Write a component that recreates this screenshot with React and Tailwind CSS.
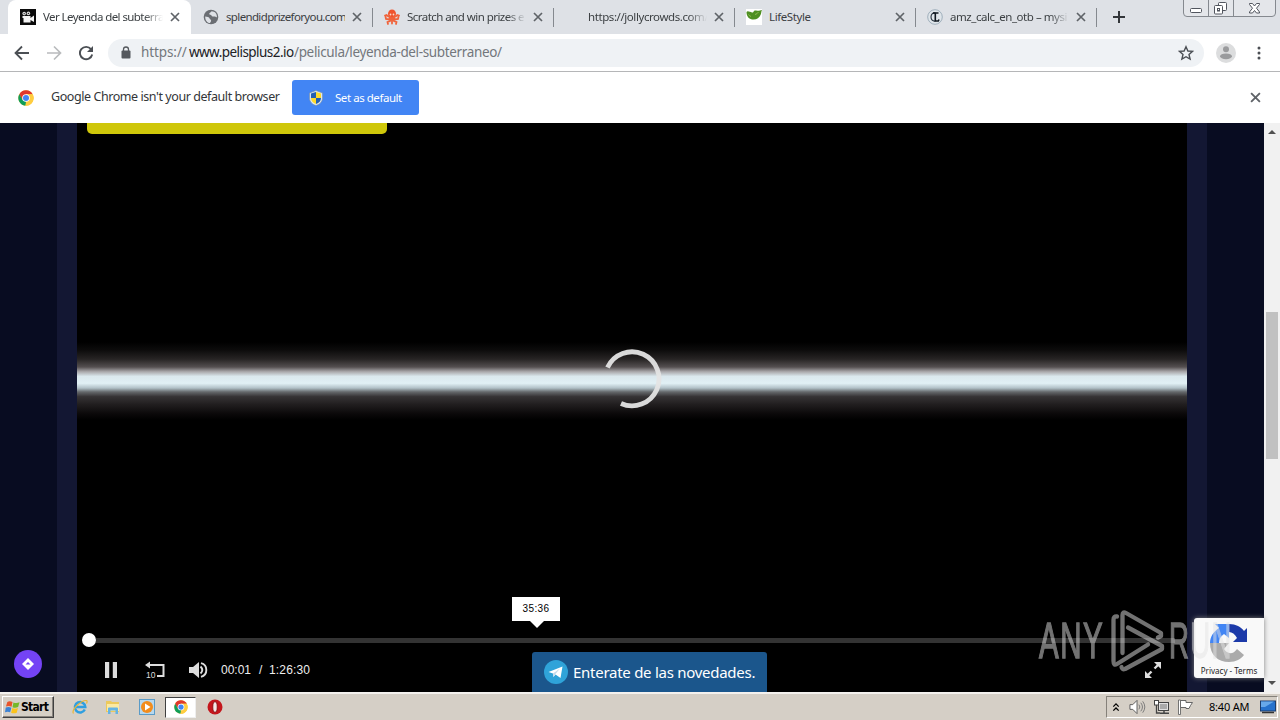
import React from "react";
import clsx from "clsx";

const CloseIcon = ({ className }) => (
  <svg viewBox="0 0 10 10" className={clsx("shrink-0", className)}>
    <path d="M1 1 9 9M9 1 1 9" stroke="currentColor" strokeWidth="1.7" fill="none" />
  </svg>
);

const ChromeLogo = ({ className }) => (
  <svg viewBox="0 0 48 48" className={clsx("shrink-0", className)}>
    <circle cx="24" cy="24" r="23" fill="#ffcd40" />
    <path d="M24 24 13 30 4 12.5A23 23 0 0 1 44 13H24Z" fill="#e0382c" />
    <path d="M4 12.5 14 30 24 35 22 47A23 23 0 0 1 4 12.5Z" fill="#0f9d58" />
    <path d="M24 13H44A23 23 0 0 1 22 47L34 29Z" fill="#ffcd40" />
    <circle cx="24" cy="24" r="11.5" fill="#fff" />
    <circle cx="24" cy="24" r="9" fill="#4285f4" />
  </svg>
);

/* ---------- favicons ---------- */

const CameraFavicon = () => (
  <svg viewBox="0 0 16 16" className="w-4 h-4">
    <rect width="16" height="16" fill="#0b0b0b" />
    <circle cx="4.2" cy="4.6" r="1.8" fill="#d8d8d8" />
    <circle cx="8.4" cy="4.4" r="1.8" fill="#d8d8d8" />
    <circle cx="4.2" cy="4.6" r=".7" fill="#222" />
    <circle cx="8.4" cy="4.4" r=".7" fill="#222" />
    <path d="M2.500 7h8v2L14 6.500v6.500L10.500 11V13.500H3.500V9H2.500Z" fill="#f4f4f4" />
  </svg>
);

const GlobeFavicon = () => (
  <svg viewBox="0 0 16 16" className="w-4 h-4">
    <circle cx="8" cy="8" r="7.3" fill="#6b6e73" />
    <path d="M2.2 7.5c2 .2 4 .4 4.400 2 .3 1 1.600.8 1.500 2.200-.1 1-.8 1.500-1.100 2.400C4.200 13.800 2 11.300 2.200 7.500ZM8.500 2.200C8.300 3.500 6 3.600 6.200 5c.2 1.100 2 .6 2.300 1.600.2.9 1.100 1.200 2 .9 1.300-.3 2 .2 3.400.9C14.300 5 12 2.300 8.500 2.200Z" fill="#dee1e6" />
  </svg>
);

const OctopusFavicon = () => (
  <svg viewBox="0 0 16 16" className="w-4 h-4">
    <ellipse cx="8" cy="4.800" rx="4" ry="4.400" fill="#f0542d" />
    <path d="M6 8 5.500 10.500 2 10 1.500 7.500M4.500 7.500 2.500 6 1 6.500M10 8l.5 2.500 3.500-.5.5-2.500M11.500 7.500l2-1.500 1.500.5M7 9l-1 3-2.500 1 .5 2M9 9l1 3 2.500 1-.5 2M8 9v5.500" stroke="#f0643c" strokeWidth="1.800" fill="none" strokeLinecap="round" />
    <circle cx="6.500" cy="5.500" r=".9" fill="#fbd9c9" />
    <circle cx="9.500" cy="5.500" r=".9" fill="#fbd9c9" />
  </svg>
);

const LeafFavicon = () => (
  <svg viewBox="0 0 16 16" className="w-4 h-4">
    <rect width="16" height="16" fill="#fff" />
    <path d="M.5 3C1.500 1.500 4 3 6 3.500 8 4 7 1 10 1.500c2 .3 3 .5 6-.5-1 2-.5 3-1.500 5C13.500 8.500 11 10.500 7.500 10.500 3.500 10.500.5 8 .5 3Z" fill="#4f9023" />
    <path d="M9 5.500q2-.3 3.500-2.500M2.500 5.500q1 1.500 2.500 2" stroke="#8fbb52" fill="none" />
  </svg>
);

const MonogramFavicon = () => (
  <svg viewBox="0 0 16 16" className="w-4 h-4">
    <circle cx="8" cy="8" r="7.300" fill="#dfe5ea" stroke="#8fa2b0" strokeWidth=".8" />
    <path d="M8.500 4C5.500 3.500 4 5.500 4 8s1.500 4.500 4.500 4" fill="none" stroke="#26323e" strokeWidth="1.100" />
    <path d="M6 4h5.500M8.300 4v8h3l.7-1.500" fill="none" stroke="#101820" strokeWidth="1.600" />
  </svg>
);

const tabs = [
  { title: "Ver Leyenda del subterra", icon: <CameraFavicon />, active: true, fade: true, track: "tracking-[-0.58px]" },
  { title: "splendidprizeforyou.com", icon: <GlobeFavicon />, track: "tracking-[-0.64px]" },
  { title: "Scratch and win prizes e", icon: <OctopusFavicon />, fade: true, track: "tracking-[-0.54px]" },
  { title: "https://jollycrowds.com/", icon: null, fade: true, track: "tracking-[-0.42px]" },
  { title: "LifeStyle", icon: <LeafFavicon />, track: "tracking-[-0.4px]" },
  { title: "amz_calc_en_otb – mysi", icon: <MonogramFavicon />, fade: true, track: "tracking-[-0.45px]" },
];

function Tab({ tab, divider }) {
  return (
    <div
      className={clsx(
        "relative flex items-center w-[181px] h-[34px] shrink-0",
        tab.active
          ? "mr-px pl-2.5 bg-white rounded-t-lg shadow-[-2px_0_0_#fff]"
          : "pl-[11px]"
      )}
    >
      <div className="w-4 h-4 shrink-0">{tab.icon}</div>
      <div
        className={clsx(
          "ml-[7px] overflow-hidden whitespace-nowrap text-[11.5px] leading-4 text-[#3c4043]",
          tab.active ? "w-[120px]" : "w-[119px]",
          tab.track,
          tab.fade && "[mask-image:linear-gradient(to_right,#000_84%,transparent)]"
        )}
      >
        {tab.title}
      </div>
      <CloseIcon className="ml-[7px] w-[10px] h-[10px] text-[#5f6368]" />
      {divider && <div className="absolute right-0 top-2 w-px h-[19px] bg-[#85898f]" />}
    </div>
  );
}

function WindowButtons() {
  return (
    <svg viewBox="0 0 94 18" className="absolute left-[1182px] top-0 w-[94px] h-[18px]">
      <path d="M1.500 0V13q0 3.500 3.500 3.500H90q3.500 0 3.500-3.500V0M26.500 0V16M51.500 0V16" fill="#e4e6ea" stroke="#85898f" />
      <g fill="#fff" stroke="#51555e">
        <rect x="8.500" y="8.500" width="11" height="4" rx="1" />
        <rect x="36.500" y="2.500" width="8" height="8" rx="1" />
        <rect x="32.500" y="5.500" width="8" height="8.500" rx="1" />
        <rect x="35.500" y="8.500" width="2" height="2.500" />
        <path d="M67.500 3.500h3l2 2.500 2-2.500h3v1l-3 3.700 3 3.800v1h-3l-2-2.500-2 2.500h-3v-1l3-3.800-3-3.700Z" />
      </g>
    </svg>
  );
}

function Toolbar() {
  return (
    <div className="flex items-center h-[38px] pl-[14px] bg-white border-b border-[#b5b6b8]">
      <svg viewBox="0 0 16 16" className="w-4 h-4 text-[#4b4f54]">
        <path d="M15 8H2M8 1.500 1.500 8 8 14.500" stroke="currentColor" strokeWidth="1.800" fill="none" />
      </svg>
      <svg viewBox="0 0 16 16" className="ml-4 w-4 h-4 text-[#b9bbbd]">
        <path d="M1 8H14M8 1.500 14.500 8 8 14.500" stroke="currentColor" strokeWidth="1.700" fill="none" />
      </svg>
      <svg viewBox="0 0 16 16" className="ml-4 w-4 h-4 text-[#4b4f54]">
        <path d="M13 4.200A6.200 6.200 0 1 0 14.200 9.500" stroke="currentColor" strokeWidth="1.900" fill="none" />
        <path d="M15 1V7H9Z" fill="currentColor" />
      </svg>
      <div className="ml-[14px] flex items-center w-[1096px] h-7 rounded-full bg-[#eff2f5] pl-[13px] pr-[10px]">
        <svg viewBox="0 0 10 13" className="w-[10px] h-[13px] mr-[10px] text-[#55595e]">
          <rect x=".5" y="4.500" width="9" height="8" rx="1" fill="currentColor" />
          <path d="M2.500 5V3.500a2.500 2.500 0 0 1 5 0V5" stroke="currentColor" strokeWidth="1.300" fill="none" />
        </svg>
        <div className="flex-1 flex whitespace-nowrap text-[13.5px] leading-5 text-[#73777c] -mt-px">
          <span className="w-[48px] tracking-[-0.1px]">https://</span>
          <span className="w-[105px] text-[#202124] tracking-[-0.55px]">www.pelisplus2.io</span>
          <span className="tracking-[-0.35px]">/pelicula/leyenda-del-subterraneo/</span>
        </div>
        <svg viewBox="0 0 16 16" className="w-4 h-4">
          <path d="m8 1.700 1.900 4.300 4.700.4-3.600 3.100 1.100 4.600L8 11.700l-4.100 2.400L5 9.500 1.400 6.400 6.100 6Z" fill="none" stroke="#4b4f54" strokeWidth="1.400" />
        </svg>
      </div>
      <svg viewBox="0 0 20 20" className="ml-3 w-5 h-5">
        <circle cx="10" cy="10" r="10" fill="#dcddde" />
        <circle cx="10" cy="6.300" r="3" fill="#9a9b9d" />
        <ellipse cx="10" cy="13.300" rx="6" ry="2.900" fill="#9a9b9d" />
      </svg>
      <svg viewBox="0 0 4 14" className="ml-[21px] w-1 h-3.5 text-[#4b4f54]">
        <g fill="currentColor">
          <circle cx="2" cy="2" r="1.500" />
          <circle cx="2" cy="7" r="1.500" />
          <circle cx="2" cy="12" r="1.500" />
        </g>
      </svg>
    </div>
  );
}

function DefaultBrowserBar() {
  return (
    <div className="flex items-center h-[51px] bg-white pl-[18px] pr-[19px]">
      <ChromeLogo className="w-4 h-4" />
      <div className="ml-[17px] -mt-[2px] w-[229px] whitespace-nowrap text-[12.5px] leading-5 text-[#333639] tracking-[-0.43px]">
        Google Chrome isn't your default browser
      </div>
      <button className="ml-3 flex items-center w-[127px] h-[35px] rounded-[3px] bg-[#4285f4] pl-[17px] text-white text-[11.5px] whitespace-nowrap tracking-[-0.45px]">
        <svg viewBox="0 0 14 16" className="w-[14px] h-[16px] mr-3">
          <path d="M7 .5 13.500 3V8c0 4-3 6.500-6.500 7.500C3.500 14.500.5 12 .5 8V3Z" fill="#d8e7f5" stroke="#778ba3" strokeWidth=".6" />
          <path d="M7 2l5 1.600V8H7ZM2 8h5v6C4 13 2 11 2 8Z" fill="#ffdb2b" />
          <path d="M7 2 2 3.600V8h5ZM7 8v6c3-1 5-3 5-6Z" fill="#2560b2" />
        </svg>
        Set as default
      </button>
      <div className="flex-1" />
      <CloseIcon className="w-[11px] h-[11px] text-[#5f6368]" />
    </div>
  );
}

function PlayerControls() {
  return (
    <div className="relative h-[62px]">
      {/* timeline */}
      <div className="flex items-center h-5 pl-[5px] pr-3">
        <div className="w-[14px] h-[14px] rounded-full bg-white" />
        <div className="flex-1 h-[5px] bg-[#333]" />
      </div>
      <div className="flex items-center h-10 pl-7 pr-[26px] text-[#ddd]">
        <svg viewBox="0 0 12 16" className="w-3 h-4">
          <path d="M0 0H4.200V16H0ZM7.800 0H12V16H7.800Z" fill="currentColor" />
        </svg>
        <svg viewBox="0 0 20 18" className="ml-7 w-5 h-[18px]">
          <path d="M2 4H18.500V15H12" stroke="currentColor" strokeWidth="2" fill="none" />
          <path d="M0 4 5 .5V7.500Z" fill="currentColor" />
          <text x="1" y="16.500" fontSize="8.500" fontFamily="Liberation Sans, sans-serif" fill="currentColor">10</text>
        </svg>
        <svg viewBox="0 0 20 16" className="ml-6 w-5 h-4">
          <path d="M0 5H4L10 0V16L4 11H0Z" fill="currentColor" />
          <path d="M11.500 4.500Q15 8 11.500 11.500M12 1.200A7 7 0 0 1 12 14.800" stroke="currentColor" strokeWidth="1.900" fill="none" />
        </svg>
        <div className="ml-3 flex text-[12px] text-[#eee] font-['Liberation_Sans',sans-serif] whitespace-pre">
          <span className="w-[38px]">00:01</span>
          <span className="w-[10px]">/</span>
          <span className="tracking-[0.15px]">1:26:30</span>
        </div>
        <div className="flex-1" />
        <svg viewBox="0 0 16 16" className="w-4 h-4">
          <path d="M9.500 6.500 14 2M6.500 9.500 2 14" stroke="currentColor" strokeWidth="2.400" />
          <path d="M9 0h7v7ZM0 9v7h7Z" fill="currentColor" />
        </svg>
      </div>
      {/* seek preview */}
      <div className="absolute left-[435px] -top-[33px] flex flex-col items-center">
        <div className="w-[48px] h-[24px] bg-white text-black text-center text-[10px] leading-6 tracking-[0.4px] font-['Liberation_Sans',sans-serif]">
          35:36
        </div>
        <svg viewBox="0 0 14 7" className="ml-[2px] w-[14px] h-[7px]">
          <path d="M0 0H14L7 7Z" fill="#fff" />
        </svg>
      </div>
    </div>
  );
}

function Player() {
  return (
    <div className="relative flex flex-col w-[1110px] h-full bg-black">
      <div className="ml-2.5 w-[300px] h-[11px] rounded-b-[5px] bg-[#cfc70a]" />
      <div className="absolute inset-x-0 top-[219px] h-[78px] bg-[linear-gradient(to_bottom,#000_0%,#0c0b0b_10%,#272424_22%,#544f50_32%,#a9a7aa_38%,#dbe8ee_44%,#e1f0f5_53%,#b1c0c7_59%,#65686b_64%,#363335_70%,#211e1f_80%,#0b090a_92%,#000_100%)]" />
      <svg viewBox="0 0 60 60" className="absolute left-[525px] top-[226px] w-[60px] h-[60px]">
        <path d="M5.500 18.500A27 27 0 1 1 19 54.500" stroke="#e4e4e4" strokeOpacity=".95" strokeWidth="4.800" fill="none" />
      </svg>
      <div className="flex-1" />
      <PlayerControls />
    </div>
  );
}

function Watermark() {
  return (
    <div className="absolute left-[1039px] top-[486px] flex items-center h-[64px] opacity-50 text-[#e4e4e4] text-[50px] leading-[40px] font-['Liberation_Sans_Narrow','Liberation_Sans',sans-serif] z-20">
      <div className="w-[72px] h-10">
        <span className="inline-block origin-left scale-x-[0.59] tracking-[2.5px] [-webkit-text-stroke:1.4px_#e4e4e4]">ANY</span>
      </div>
      <svg viewBox="0 0 54 64" className="w-[54px] h-[64px]">
        <g fill="none" stroke="#e4e4e4" strokeWidth="4.300" strokeLinejoin="round" strokeLinecap="round">
          <path d="M6 7.500Q2.500 7 2.500 11V52Q2.500 57 6 55L37 35.500" />
          <path d="M11.500 44V6Q11.500 2 15 4L50 24V27L47 28.500" />
          <path d="M17 18.500 51 37V40L14 60Q11 61 10.500 58" />
        </g>
      </svg>
      <div className="ml-[4px] w-[62px] h-10">
        <span className="inline-block origin-left scale-x-[0.55] tracking-[2.5px] [-webkit-text-stroke:1.4px_#e4e4e4]">RUN</span>
      </div>
    </div>
  );
}

function Recaptcha() {
  return (
    <div className="absolute left-[1194px] top-[495px] flex flex-col items-center w-[70px] h-[60px] rounded-l-[3px] bg-[#f9f9f9] shadow-[0_0_5px_#808080]">
      <svg viewBox="0 0 38 38" className="mt-[6px] w-[38px] h-[38px]">
        <path d="M19 0C26 0 31 3 34 7l3-3V18H23l4-4c-2-4-5-6-8-6Z" fill="#1c3aa9" />
        <path d="M19 0H5l4 4C3 8 0 13 0 19h9c0-4 2-7 5-9l5 4Z" fill="#4285f4" />
        <path d="M0 19c0 12 8 19 19 19 7 0 12-3 15-7l-7-6c-4 6-10 5-13 0l5-6Z" fill="#ababab" />
      </svg>
      <div className="mt-[3px] text-[8px] leading-3 text-[#222] whitespace-nowrap">Privacy - Terms</div>
    </div>
  );
}

function Scrollbar() {
  return (
    <div className="flex flex-col items-center w-4 h-full bg-[#f1f1f1]">
      <svg viewBox="0 0 8 4" className="mt-[7px] w-2 h-1">
        <path d="M0 4 4 0 8 4Z" fill="#505050" />
      </svg>
      <div className="mt-[178px] w-[12px] h-[147px] bg-[#c1c1c1]" />
      <div className="flex-1" />
      <svg viewBox="0 0 8 4" className="mb-[7px] w-2 h-1">
        <path d="M0 0 4 4 8 0Z" fill="#505050" />
      </svg>
    </div>
  );
}

function Page() {
  return (
    <div className="relative flex h-[569px] bg-[#080c21] overflow-hidden">
      <div className="w-[57px]" />
      <div className="w-5 bg-[#131733]" />
      <Player />
      <div className="w-5 bg-[#131733]" />
      <div className="w-[57px]" />
      <Scrollbar />

      <div className="absolute left-[14px] top-[527px] w-7 h-7 rounded-full bg-[#7443f5] flex items-center justify-center">
        <svg viewBox="0 0 12 12" className="w-3 h-3">
          <path d="M6 0 12 6 6 12 0 6Z" fill="#fff" />
          <path d="M3.500 6.500 6 4l2.500 2.500Z" fill="#7443f5" />
        </svg>
      </div>

      <a className="absolute left-[532px] top-[529px] flex items-center w-[235px] h-10 rounded-t-[3px] bg-[#1b568c] pl-3 text-white text-[15px] whitespace-nowrap tracking-[-0.27px]">
        <svg viewBox="0 0 24 24" className="w-6 h-6 mr-[5px]">
          <circle cx="12" cy="12" r="12" fill="#2fa3d9" />
          <path d="M4.500 12 18.500 6.500 16.500 18 11.500 14.500 9.500 17 9 13.500Z" fill="#fff" />
          <path d="M9 13.500 16 8.500 11 14.500 9.500 17Z" fill="#c5daea" />
        </svg>
        Enterate de las novedades.
      </a>

      <Recaptcha />
      <Watermark />
    </div>
  );
}

/* ---------- taskbar ---------- */

function Taskbar() {
  return (
    <div className="flex items-center h-7 bg-[#d5cfc6] border-t-2 border-[#f3f1ee] pl-[2px] pr-[2px] text-black">
      <button className="flex items-center w-[52px] h-[22px] border border-t-white border-l-white border-r-[#404040] border-b-[#404040] shadow-[inset_-1px_-1px_0_#88847e] pl-[2px] text-[12px] font-bold font-['DejaVu_Sans_Condensed','DejaVu_Sans',sans-serif] tracking-[-0.7px]">
        <svg viewBox="0 0 16 16" className="w-[15px] h-[15px] mr-[1px] shrink-0">
          <path d="M2.500 2Q5 .5 8 2.200L7 7.200Q4 5.800 1 7Z" fill="#e8542a" />
          <path d="M9 2.600Q12 4 15.500 2.500L14 7.500Q11 9 8 7.600Z" fill="#76b82a" />
          <path d="M.8 8Q4 6.800 6.800 8.200L5.500 13Q3 11.800 0 13Z" fill="#3b82d4" />
          <path d="M7.800 8.600Q11 10 13.800 8.500L12.500 13.500Q9.500 15 6.500 13.500Z" fill="#fbc31c" />
        </svg>
        Start
      </button>
      {/* quick launch */}
      <svg viewBox="0 0 16 16" className="ml-[18px] w-4 h-4">
        <path d="M12.800 10.500A5.200 5.200 0 1 1 13.300 8H4" fill="none" stroke="#2f9fe0" strokeWidth="2.500" />
        <path d="M1.500 14.500C-1 11 9 1 14.500 1.500c1 .5.5 2 0 3" fill="none" stroke="#e7b637" strokeWidth="1.200" />
      </svg>
      <svg viewBox="0 0 16 16" className="ml-[17px] w-4 h-4">
        <path d="M1 2h5l1 1h7v10H1Z" fill="#ecc95c" />
        <path d="M2 5h12v7H2Z" fill="#fbe9a2" />
        <path d="M3 15V9.500q0-1 1-1h8q1 0 1 1V15h-2.500v-3.500h-5V15Z" fill="#65b4e4" />
      </svg>
      <svg viewBox="0 0 16 16" className="ml-[18px] w-4 h-4">
        <rect x=".5" y=".5" width="15" height="15" fill="#b7d8ee" stroke="#5a9bc7" />
        <circle cx="8" cy="8" r="6" fill="#f28c1c" />
        <path d="M6 4.500 11.500 8 6 11.500Z" fill="#fff" />
      </svg>
      <div className="ml-[10px] flex items-center justify-center w-[31px] h-[21px] bg-white border border-t-[#404040] border-l-[#404040] border-r-[#eee] border-b-[#eee]">
        <ChromeLogo className="w-[14px] h-[14px]" />
      </div>
      <svg viewBox="0 0 16 16" className="ml-[11px] w-4 h-4">
        <circle cx="8" cy="8" r="7.500" fill="#c4161c" />
        <ellipse cx="8" cy="8" rx="2.200" ry="5.300" fill="#f5e9e6" stroke="#7e0a0e" strokeWidth=".8" />
      </svg>
      <div className="flex-1" />
      {/* notification area */}
      <div className="flex items-center w-[172px] h-[22px] border border-t-[#85817a] border-l-[#85817a] border-r-white border-b-white pl-[5px]">
        <svg viewBox="0 0 8 10" className="w-2 h-[9px]">
          <path d="M1 4 4 1 7 4M1 8.500 4 5.500 7 8.500" stroke="#000" strokeWidth="1.400" fill="none" />
        </svg>
        <svg viewBox="0 0 18 16" className="ml-[9px] w-[17px] h-4">
          <path d="M1 5.500H4L8.500 1V15L4 10.500H1Z" fill="#fff" stroke="#5a5a5a" />
          <path d="M10.500 5.500Q12.500 8 10.500 10.500M12.500 3.500Q16 8 12.500 12.500M14.500 2Q19 8 14.500 14" fill="none" stroke="#777" />
        </svg>
        <svg viewBox="0 0 17 16" className="ml-[7px] w-[17px] h-4">
          <rect x="5.500" y="3.500" width="10" height="8" fill="#aaa" stroke="#444" />
          <rect x="6.500" y="4.500" width="8" height="6" fill="none" stroke="#eee" strokeWidth=".8" />
          <path d="M7 14.300h9M11 12v2" stroke="#444" strokeWidth="1.500" />
          <rect x="1.500" y="1.500" width="4" height="4.500" fill="#fff" stroke="#444" />
          <path d="M3.500 6V14H7" fill="none" stroke="#444" strokeWidth="1.300" />
        </svg>
        <svg viewBox="0 0 17 16" className="ml-[7px] w-[17px] h-4">
          <path d="M3.500 1.500H9V3.500H15.500L13.500 6.500 12 9.500H9V8.500H3.500Z" fill="#fff" stroke="#666" />
          <path d="M1.500 1V15.500H3.500V1Z" fill="#fff" stroke="#666" strokeWidth=".9" />
        </svg>
        <div className="ml-[15px] w-[42px] whitespace-nowrap text-[11px] tracking-[-0.2px]">8:40 AM</div>
        <svg viewBox="0 0 16 14" className="ml-[9px] w-4 h-[14px]">
          <rect x=".5" y="1" width="15" height="10" fill="#2672cc" stroke="#1c3d6c" />
          <path d="M1 1.500H14L5 7H1Z" fill="#67a9ea" />
          <path d="M2 12.500h12" stroke="#333" strokeWidth="1.500" />
        </svg>
      </div>
    </div>
  );
}

export default function App() {
  return (
    <div className="w-[1280px] h-[720px] overflow-hidden font-['Noto_Sans','Open_Sans',sans-serif]">
      <div className="relative flex h-[34px] pl-[10px] bg-[#dee1e6]">
        {tabs.map((tab, i) => (
          <Tab key={tab.title} tab={tab} divider={i > 0} />
        ))}
        <svg viewBox="0 0 12 12" className="ml-[16px] mt-[11px] w-3 h-3">
          <path d="M6 0V12M0 6H12" stroke="#33363a" strokeWidth="2" />
        </svg>
        <WindowButtons />
      </div>
      <Toolbar />
      <DefaultBrowserBar />
      <Page />
      <Taskbar />
    </div>
  );
}
